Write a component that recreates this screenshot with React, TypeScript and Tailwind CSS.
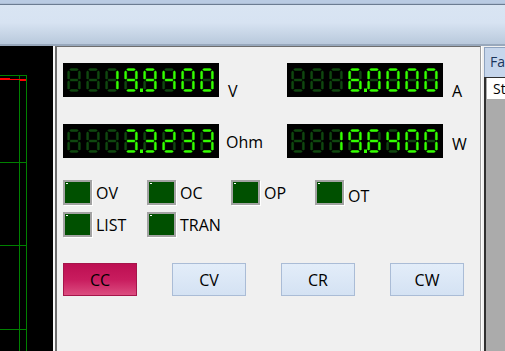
const FONT = "font-['Open_Sans','Liberation_Sans',sans-serif]";

const SEGS: Record<string, string> = {
  "0": "abcdef",
  "1": "bc",
  "2": "abged",
  "3": "abgcd",
  "4": "fgbc",
  "5": "afgcd",
  "6": "afgedc",
  "7": "abc",
  "8": "abcdefg",
  "9": "abcdfg",
  " ": "",
};

const h = (x1: number, x2: number, y: number) =>
  `${x1},${y} ${x1 + 1.5},${y - 1.5} ${x2 - 1.5},${y - 1.5} ${x2},${y} ${x2 - 1.5},${y + 1.5} ${x1 + 1.5},${y + 1.5}`;
const v = (x: number, y1: number, y2: number) =>
  `${x},${y1} ${x + 1.5},${y1 + 1.5} ${x + 1.5},${y2 - 1.5} ${x},${y2} ${x - 1.5},${y2 - 1.5} ${x - 1.5},${y1 + 1.5}`;

const SHAPES: Record<string, string> = {
  a: h(2.2, 11.8, 1.6),
  b: v(12.4, 2.2, 11.8),
  c: v(12.4, 12.2, 21.8),
  d: h(2.2, 11.8, 22.4),
  e: v(1.6, 12.2, 21.8),
  f: v(1.6, 2.2, 11.8),
  g: h(2.2, 11.8, 12),
};

function Digit({ ch, dot }: { ch: string; dot: boolean }) {
  const on = SEGS[ch] ?? "";
  return (
    <svg width="19" height="24" viewBox="0 0 19 24" className="block">
      {Object.keys(SHAPES).map((k) => (
        <polygon
          key={k}
          points={SHAPES[k]}
          fill={on.includes(k) ? "#33ff00" : "#0f470f"}
          stroke="#000"
          strokeWidth="0.5"
        />
      ))}
      {dot && <rect x="16" y="20.5" width="3" height="3.5" fill="#33ff00" />}
    </svg>
  );
}

function SegDisplay({ value }: { value: string }) {
  // value like "  19.9400" -> 8 positions, dot attached to preceding digit
  const cells: { ch: string; dot: boolean }[] = [];
  for (const c of value) {
    if (c === ".") cells[cells.length - 1].dot = true;
    else cells.push({ ch: c, dot: false });
  }
  return (
    <div className="flex w-[156px] h-[34px] shrink-0 bg-black pl-[4px] pt-[5px]">
      {cells.map((c, i) => (
        <Digit key={i} ch={c.ch} dot={c.dot} />
      ))}
    </div>
  );
}

function Led({ label, shift }: { label: string; shift?: boolean }) {
  return (
    <div className="flex items-center gap-[4px] h-[25px]">
      <div className="w-[29px] h-[25px] border-2 border-[#a3a3a3] bg-[#005000] shadow-[1px_1px_0_#ffffff] relative">
        <div className="absolute left-[1px] top-[1px] w-[2px] h-[1px] bg-white" />
      </div>
      <span className={`text-[16px] leading-none text-black ${shift ? "mt-[6px]" : ""}`}>{label}</span>
    </div>
  );
}

function ModeButton({ label, active }: { label: string; active?: boolean }) {
  return (
    <button
      className={
        active
          ? "w-[74px] h-[33px] border border-[#a5154a] bg-[linear-gradient(to_bottom,#bd0f52,#c81c5e_50%,#dc4d80)] text-[16px] text-black"
          : "w-[74px] h-[33px] border border-[#aabcd6] bg-[linear-gradient(to_bottom,#e3edf9,#d4e2f3)] text-[16px] text-black"
      }
    >
      {label}
    </button>
  );
}

export default function App() {
  return (
    <div className={`w-[505px] h-[351px] flex flex-col overflow-hidden bg-[#f0f0f0] ${FONT}`}>
      {/* window title area */}
      <div className="h-[46px] flex flex-col shrink-0">
        <div className="h-[4px] bg-[#b9cbe3] border-b border-[#aebfd6]" />
        <div className="h-[1px] bg-[#6b7c92]" />
        <div className="flex-1 bg-[linear-gradient(to_bottom,#d9e5f3,#d7e3f2_45%,#b9c9dc)]" />
        <div className="h-[2px] bg-[#98a8bc]" />
      </div>

      <div className="flex flex-1 min-h-0">
        {/* chart panel */}
        <div className="w-[53px] bg-black shrink-0">
          <svg width="53" height="305" viewBox="0 0 53 305" className="block">
            <g stroke="#008000" strokeWidth="1" fill="none">
              <line x1="0" y1="29.5" x2="27" y2="29.5" />
              <line x1="0" y1="116.5" x2="27" y2="116.5" />
              <line x1="0" y1="199.5" x2="27" y2="199.5" />
              <line x1="0" y1="283.5" x2="27" y2="283.5" />
              <line x1="19.5" y1="29" x2="19.5" y2="305" />
              <line x1="26.5" y1="29" x2="26.5" y2="305" />
            </g>
            <g fill="#ff0000">
              <rect x="0" y="32" width="10" height="2" />
              <rect x="10" y="33" width="10" height="1" />
              <rect x="20" y="33" width="6" height="2" />
            </g>
          </svg>
        </div>
        <div className="w-[2px] bg-[#f8f8f8] shrink-0" />

        {/* main panel */}
        <div className="w-[426px] shrink-0 border-l-2 border-t border-r border-l-[#6e6e6e] border-t-[#6e6e6e] border-r-[#a0a0a0] pl-[6px] pt-[16px] flex flex-col">
          <div className="grid grid-cols-[224px_1fr] gap-y-[27px]">
            <div className="flex items-end h-[34px]">
              <SegDisplay value="  19.9400" />
              <span className="ml-[9px] -mb-[2px] text-[16px] leading-none">V</span>
            </div>
            <div className="flex items-end h-[34px]">
              <SegDisplay value="   6.0000" />
              <span className="ml-[9px] -mb-[2px] text-[16px] leading-none">A</span>
            </div>
            <div className="flex items-center h-[34px]">
              <SegDisplay value="   3.3233" />
              <span className="ml-[7px] mt-[1px] text-[16px] leading-none">Ohm</span>
            </div>
            <div className="flex items-center h-[34px]">
              <SegDisplay value="  19.6400" />
              <span className="ml-[9px] mt-[5px] text-[16px] leading-none">W</span>
            </div>
          </div>

          <div className="grid grid-cols-[84px_84px_84px_84px] gap-y-[7px] mt-[22px]">
            <Led label="OV" />
            <Led label="OC" />
            <Led label="OP" />
            <Led label="OT" shift />
            <Led label="LIST" />
            <Led label="TRAN" />
          </div>

          <div className="flex gap-[35px] mt-[26px]">
            <ModeButton label="CC" active />
            <ModeButton label="CV" />
            <ModeButton label="CR" />
            <ModeButton label="CW" />
          </div>
        </div>

        <div className="w-[1px] bg-white shrink-0" />
        <div className="w-[2px] bg-[#f0f0f0] shrink-0" />

        {/* right side panel */}
        <div className="flex-1 flex flex-col pt-[1px]">
          <div className="h-[30px] bg-[#c6d6ec] border-t border-l border-[#8fa3bf] pl-[5px] pt-[7px] text-[14px] leading-none text-[#1b355c]">
            Fa
          </div>
          <div className="flex-1 flex flex-col border-l-2 border-t border-[#2f2f2f] bg-[#ababab]">
            <div className="h-[21px] bg-white ml-[1px] pl-[6px] pt-[4px] text-[14px] leading-none text-black">
              St
            </div>
          </div>
        </div>
      </div>
    </div>
  );
}
